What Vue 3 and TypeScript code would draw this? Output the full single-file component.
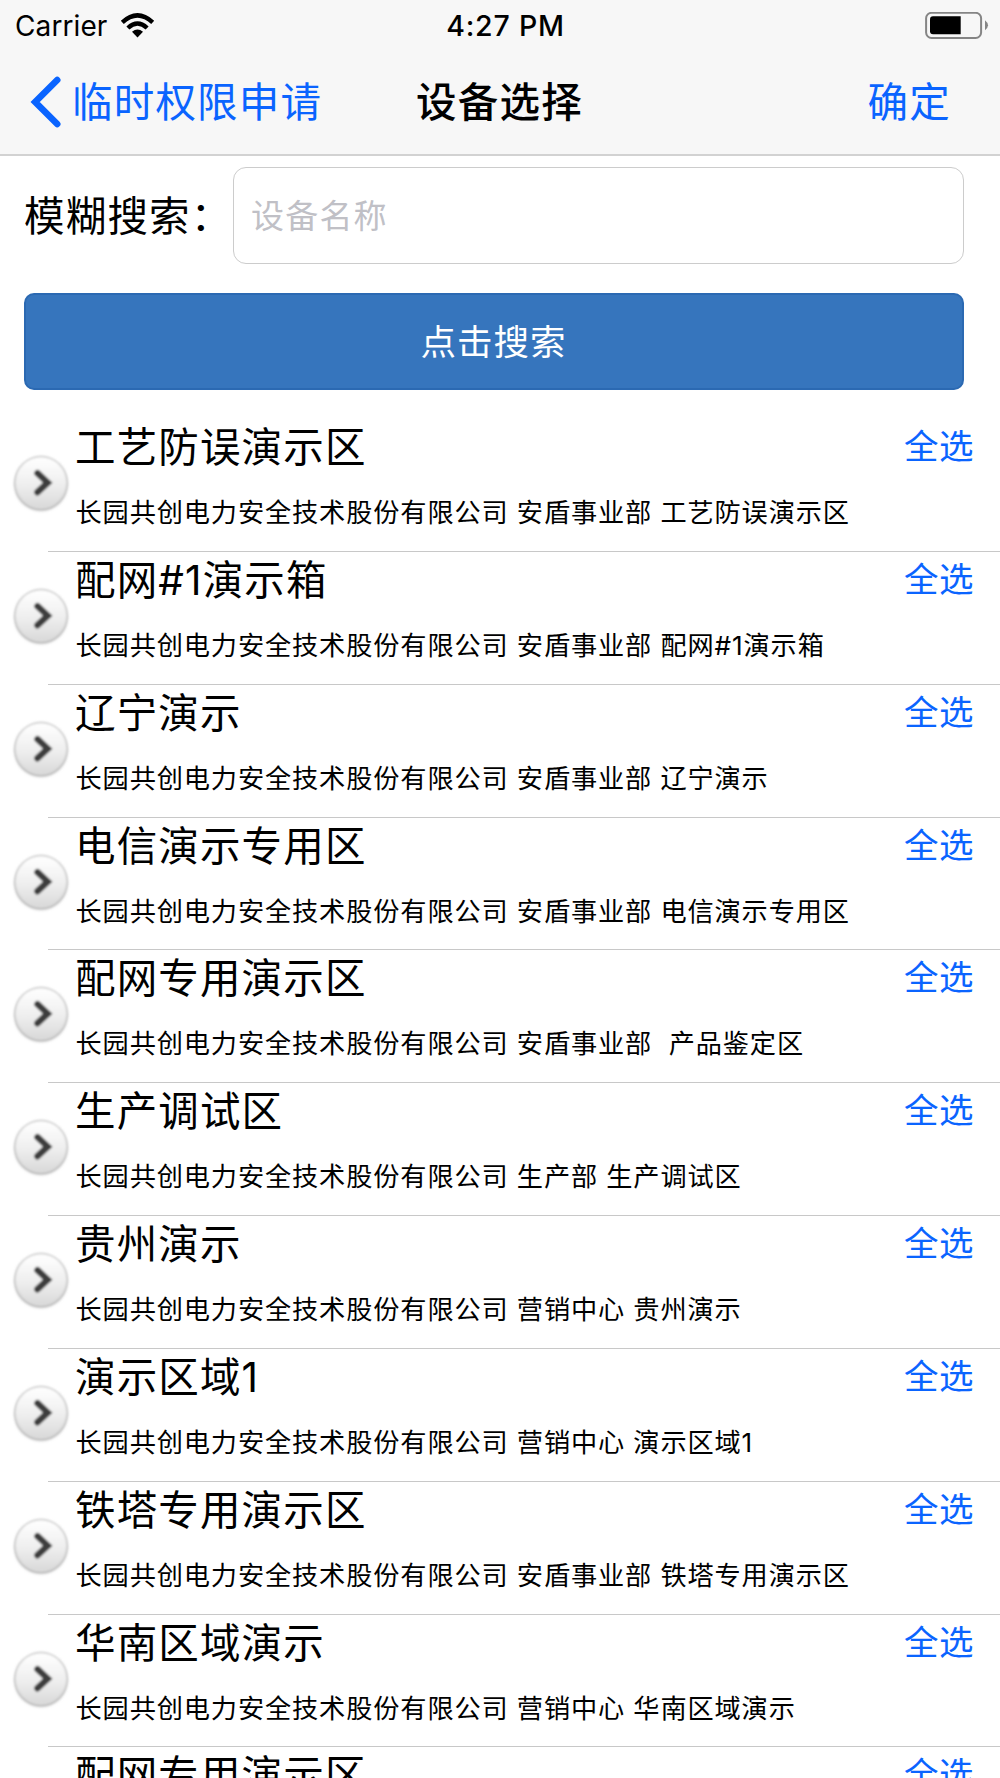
<script setup lang="ts">
import { ref } from 'vue'

interface Area {
  name: string
  path: string
}

const company = '长园共创电力安全技术股份有限公司'
const keyword = ref('')

const areas: Area[] = [
  { name: '工艺防误演示区', path: `${company} 安盾事业部 工艺防误演示区` },
  { name: '配网#1演示箱', path: `${company} 安盾事业部 配网#1演示箱` },
  { name: '辽宁演示', path: `${company} 安盾事业部 辽宁演示` },
  { name: '电信演示专用区', path: `${company} 安盾事业部 电信演示专用区` },
  { name: '配网专用演示区', path: `${company} 安盾事业部  产品鉴定区` },
  { name: '生产调试区', path: `${company} 生产部 生产调试区` },
  { name: '贵州演示', path: `${company} 营销中心 贵州演示` },
  { name: '演示区域1', path: `${company} 营销中心 演示区域1` },
  { name: '铁塔专用演示区', path: `${company} 安盾事业部 铁塔专用演示区` },
  { name: '华南区域演示', path: `${company} 营销中心 华南区域演示` },
  { name: '配网专用演示区', path: `${company} 安盾事业部 配网专用演示区` },
]
</script>

<template>
  <div class="screen">
    <header class="header">
      <div class="status">
        <div class="carrier">
          <span>Carrier</span>
          <svg class="wifi" width="35" height="26" viewBox="0 0 35 26">
            <path d="M.8 7.700Q17.500-7.700 34.200 7.700L31.200 11Q17.500-1.400 3.800 11Z" />
            <path d="M6.400 13.400Q17.500 3.300 28.600 13.400L25.600 16.500Q17.500 9.200 9.400 16.500Z" />
            <path d="M12 18.800Q17.500 14.300 23 18.800L17.500 24.400Z" />
          </svg>
        </div>
        <span class="time">4:27 PM</span>
        <svg class="battery" width="64" height="28" viewBox="0 0 64 28">
          <rect x="1.100" y=".8" width="55" height="25.200" rx="5.500" fill="none" stroke="#858585" stroke-width="2" />
          <path d="M35.700 4.200V22.200H8Q5 22.200 5 19.200V7.200Q5 4.200 8 4.200Z" fill="#000" />
          <path d="M60 8.200Q66 13.200 60 18.200Z" fill="#858585" />
        </svg>
      </div>
      <nav class="nav">
        <a class="back">
          <svg width="31" height="52" viewBox="0 0 31 52">
            <path d="M27.200 4L5.200 26L27.200 48" fill="none" stroke="#0a64ff" stroke-width="6.600" stroke-linecap="round" stroke-linejoin="miter" />
          </svg>
          <span>临时权限申请</span>
        </a>
        <h1 class="title">设备选择</h1>
        <a class="confirm">确定</a>
      </nav>
    </header>

    <main>
      <div class="search">
        <label class="label" for="keyword">模糊搜索：</label>
        <input id="keyword" v-model="keyword" class="input" placeholder="设备名称" />
      </div>
      <button class="submit">点击搜索</button>

      <ul class="list">
        <li v-for="(area, i) in areas" :key="i" class="row">
          <svg class="disc" width="60" height="64" viewBox="0 0 60 64">
            <defs>
              <linearGradient :id="`face${i}`" x1="0" y1="0" x2="0" y2="1">
                <stop offset="0" stop-color="#ffffff" />
                <stop offset=".5" stop-color="#f0f0f0" />
                <stop offset="1" stop-color="#dadada" />
              </linearGradient>
              <filter :id="`soft${i}`" x="-20%" y="-20%" width="140%" height="140%">
                <feGaussianBlur stdDeviation="1.700" />
              </filter>
              <filter :id="`edge${i}`" x="-30%" y="-30%" width="160%" height="160%">
                <feGaussianBlur stdDeviation="1" />
              </filter>
            </defs>
            <circle cx="30" cy="31.300" r="26.400" fill="#b4b4b4" :filter="`url(#soft${i})`" />
            <g :filter="`url(#edge${i})`">
              <circle cx="30" cy="29.400" r="26.800" fill="#d8d8d8" />
              <circle cx="30" cy="29.400" r="25" :fill="`url(#face${i})`" />
              <path d="M26.500 20.200L36.700 29.700L26.500 39.200" fill="none" stroke="#3c3c3c" stroke-width="6.600" stroke-linecap="round" />
            </g>
          </svg>
          <div class="content">
            <div class="top">
              <span class="name">{{ area.name }}</span>
              <a class="all">全选</a>
            </div>
            <div class="path">{{ area.path }}</div>
          </div>
        </li>
      </ul>
    </main>
  </div>
</template>

<style>
body {
  background: #fff;
}
</style>

<style scoped>
.screen {
  box-sizing: border-box;
  width: 1000px;
  height: 1778px;
  overflow: hidden;
  background: #fff;
  color: #000;
  font-family: Inter, "Noto Sans CJK SC", sans-serif;
}
.header {
  box-sizing: border-box;
  height: 156px;
  background: #f7f7f7;
  border-bottom: 2px solid #d2d2d2;
}
.status {
  display: grid;
  grid-template-columns: 1fr auto 1fr;
  align-items: center;
  height: 50px;
  padding: 0 11px 0 15px;
  font-size: 28px;
  line-height: 50px;
}
.carrier {
  display: flex;
  align-items: center;
  gap: 13px;
  letter-spacing: 0.1px;
}
.carrier span {
  padding-top: 1px;
}
.time {
  padding-left: 7px;
  font-size: 28.5px;
  font-weight: 500;
  letter-spacing: 0.8px;
}
.battery {
  justify-self: end;
}
.nav {
  display: grid;
  grid-template-columns: 1fr auto 1fr;
  align-items: center;
  height: 104px;
  padding: 0 49px 0 30px;
  font-size: 40.5px;
  line-height: 60px;
  letter-spacing: 1.2px;
}
.back {
  display: flex;
  align-items: center;
  gap: 11px;
  color: #0a64ff;
}
.back span,
.title,
.confirm {
  padding-top: 2px;
}
.title {
  margin: 0;
  padding-left: 18px;
  font-size: inherit;
  font-weight: 500;
}
.confirm {
  justify-self: end;
  color: #0a64ff;
}
.search {
  display: flex;
  align-items: center;
  padding: 11px 36px 0 24px;
}
.label {
  width: 209px;
  padding-top: 3px;
  font-size: 40.5px;
  line-height: 60px;
  letter-spacing: 1.2px;
  white-space: nowrap;
}
.input {
  box-sizing: border-box;
  flex: 1;
  min-width: 0;
  height: 97px;
  padding: 0 17px;
  border: 1px solid #ccc;
  border-radius: 13px;
  background: #fff;
  font: 33px Inter, "Noto Sans CJK SC", sans-serif;
  letter-spacing: 1.2px;
  outline: none;
}
.input::placeholder {
  color: #c0c0c6;
  opacity: 1;
}
.submit {
  display: block;
  box-sizing: border-box;
  width: 940px;
  height: 97px;
  margin: 29px 0 29px 24px;
  padding: 0 1px 5px 0;
  border: 2px solid #2b69b2;
  border-radius: 10px;
  background: #3675bd;
  color: #fff;
  font: 35.5px Inter, "Noto Sans CJK SC", sans-serif;
  letter-spacing: 1px;
}
.list {
  margin: 0;
  padding: 0;
  list-style: none;
}
.row {
  display: flex;
  height: 132.85px;
}
.disc {
  flex: none;
  margin: 34px 0 0 11px;
}
.content {
  flex: 1;
  box-sizing: border-box;
  margin-left: -23px;
  padding-left: 27px;
  border-bottom: 1px solid #c8c8c8;
}
.top {
  display: flex;
  justify-content: space-between;
  height: 60px;
  padding-right: 26px;
  line-height: 57px;
}
.name {
  font-size: 40.5px;
  letter-spacing: 1.15px;
}
.all {
  color: #0a64ff;
  font-size: 34.5px;
  line-height: 56px;
  letter-spacing: 0.5px;
}
.path {
  padding: 14px 0 0 0.5px;
  font-size: 26.2px;
  line-height: 40px;
  letter-spacing: 0.88px;
  white-space: pre;
}
</style>
